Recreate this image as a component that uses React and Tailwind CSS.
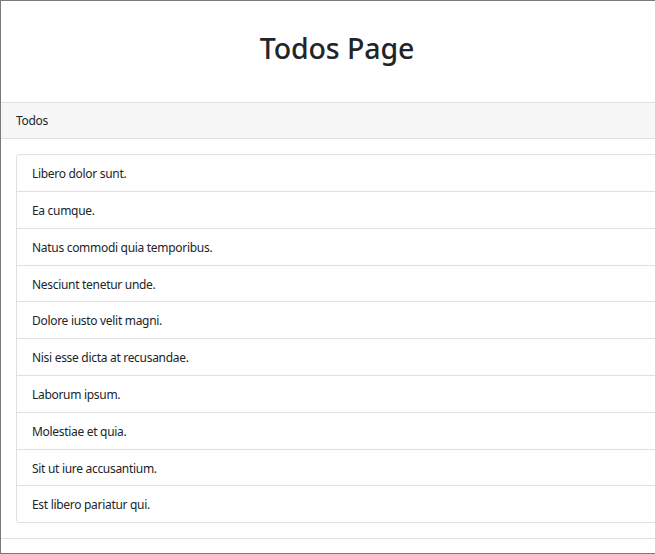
import React from 'react';

const todos = [
  'Libero dolor sunt.',
  'Ea cumque.',
  'Natus commodi quia temporibus.',
  'Nesciunt tenetur unde.',
  'Dolore iusto velit magni.',
  'Nisi esse dicta at recusandae.',
  'Laborum ipsum.',
  'Molestiae et quia.',
  'Sit ut iure accusantium.',
  'Est libero pariatur qui.',
];

const App = () => {
  return (
    <div
      className="h-[554px] overflow-hidden border-y border-l border-[#7a7a7a] bg-white text-[#212529]"
      style={{ fontFamily: '"Noto Sans", "Open Sans", sans-serif' }}
    >
      <div className="w-[672px]">
        {/* Title */}
        <div className="h-[101px] pt-[30px] text-center">
          <h1 className="text-[28.5px] leading-[34px] font-medium tracking-[-0.1px]">Todos Page</h1>
        </div>

        {/* Card */}
        <div className="border-y border-r border-[#e0e0e0]">
          <div className="bg-[#f7f7f7] border-b border-[#e0e0e0] px-[15px] pt-[9px] pb-[8px] text-[12px] leading-[18px] tracking-[-0.3px]">
            Todos
          </div>
          <div className="p-[15px]">
            <ul className="border border-[#e0e0e0] rounded-[3px]">
              {todos.map((todo, i) => (
                <li
                  key={i}
                  className={`px-[15px] pt-[10px] pb-[8px] text-[12px] leading-[18px] tracking-[-0.3px] ${
                    i > 0 ? 'border-t border-[#e0e0e0]' : ''
                  } ${i % 5 === 4 ? '-mt-px' : ''}`}
                >
                  {todo}
                </li>
              ))}
            </ul>
          </div>
        </div>
      </div>
    </div>
  );
};

export default App;
